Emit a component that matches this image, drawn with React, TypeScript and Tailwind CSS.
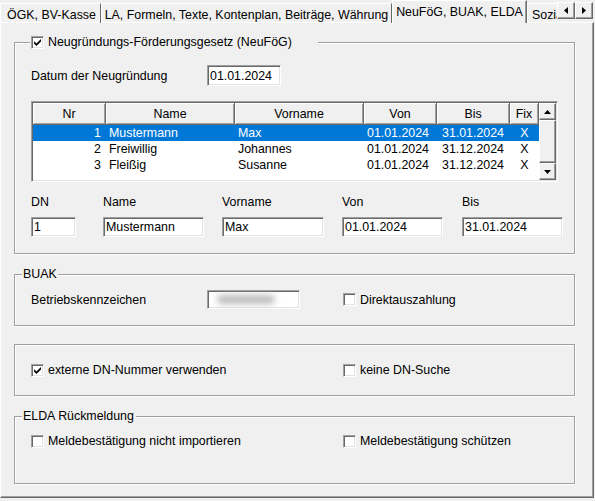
import React from "react";

type Row = { nr: number; name: string; vorname: string; von: string; bis: string; fix: string };

const rows: Row[] = [
  { nr: 1, name: "Mustermann", vorname: "Max", von: "01.01.2024", bis: "31.01.2024", fix: "X" },
  { nr: 2, name: "Freiwillig", vorname: "Johannes", von: "01.01.2024", bis: "31.12.2024", fix: "X" },
  { nr: 3, name: "Fleißig", vorname: "Susanne", von: "01.01.2024", bis: "31.12.2024", fix: "X" },
];

const raised =
  "border border-t-white border-l-white border-r-[#696969] border-b-[#696969] bg-[#f0f0f0] shadow-[inset_-1px_-1px_0_#a0a0a0]";
const sunken =
  "border border-t-[#a0a0a0] border-l-[#a0a0a0] border-r-white border-b-white bg-white shadow-[inset_1px_1px_0_#696969,inset_-1px_-1px_0_#e3e3e3]";
const group =
  "w-[561px] border border-[#a0a0a0] shadow-[inset_1px_1px_0_#fff,1px_1px_0_#fff]";
const head =
  "flex items-center justify-center border-r border-b border-[#696969] bg-[#f0f0f0] shadow-[inset_1px_1px_0_#fff,inset_-1px_-1px_0_#a0a0a0]";

const Check = ({ checked }: { checked?: boolean }) => (
  <span className={`flex h-[13px] w-[13px] shrink-0 items-center justify-center ${sunken}`}>
    {checked && (
      <svg width="7" height="7" viewBox="0 0 7 7">
        <path d="M0 2.2 L2.4 4.6 L7 0 L7 2.4 L2.4 7 L0 4.6 Z" fill="#000" />
      </svg>
    )}
  </span>
);

const CheckLabel = ({ checked, className = "", children }: { checked?: boolean; className?: string; children: React.ReactNode }) => (
  <div className={`flex items-center gap-[4px] whitespace-nowrap ${className}`}>
    <Check checked={checked} />
    <span>{children}</span>
  </div>
);

const Field = ({ className = "", children }: { className?: string; children?: React.ReactNode }) => (
  <div className={`flex shrink-0 items-center pl-[2px] whitespace-nowrap ${sunken} ${className}`}>{children}</div>
);

const Arrow = ({ dir }: { dir: "left" | "right" | "up" | "down" }) => {
  const pts = {
    left: "4,0 0,3.5 4,7",
    right: "0,0 4,3.5 0,7",
    up: "0,4 3.5,0 7,4",
    down: "0,0 7,0 3.5,4",
  }[dir];
  const horiz = dir === "left" || dir === "right";
  return (
    <svg width={horiz ? 4 : 7} height={horiz ? 7 : 4} viewBox={horiz ? "0 0 4 7" : "0 0 7 4"}>
      <polygon points={pts} fill="#000" />
    </svg>
  );
};

const TabStrip = () => (
  <div className="flex h-[23px] items-end">
    <div className="flex h-[23px] w-[557px] shrink-0 items-end overflow-x-clip">
      <div className="flex h-[20px] w-[101px] shrink-0 justify-center border-t border-l border-r border-t-white border-l-white border-r-[#696969] pt-[4px] pl-[2px] whitespace-nowrap">
        ÖGK, BV-Kasse
      </div>
      <div className="flex h-[20px] w-[291px] shrink-0 justify-center border-t border-l border-r border-t-white border-l-white border-r-[#696969] pt-[4px] whitespace-nowrap">
        LA, Formeln, Texte, Kontenplan, Beiträge, Währung
      </div>
      <div className="relative z-10 flex h-[23px] w-[135px] shrink-0 justify-center border-t border-l border-r border-t-white border-l-white border-r-[#696969] bg-[#f0f0f0] pt-[4px] whitespace-nowrap shadow-[inset_-1px_0_0_#a0a0a0]">
        NeuFöG, BUAK, ELDA
      </div>
      <div className="flex h-[20px] w-[30px] shrink-0 overflow-hidden border-t border-l border-t-white border-l-white pl-[4px] pt-[4px] whitespace-nowrap">
        Sozialversicherung
      </div>
    </div>
    <div className="mt-[2px] flex self-start">
      <div className={`flex h-[17px] w-[18px] items-center justify-center ${raised}`}>
        <Arrow dir="left" />
      </div>
      <div className={`flex h-[17px] w-[18px] items-center justify-center ${raised}`}>
        <Arrow dir="right" />
      </div>
    </div>
  </div>
);

const Table = () => (
  <div className={`ml-[16px] mt-[15px] flex h-[81px] w-[527px] p-px ${sunken}`}>
    <div className="w-[506px]">
      <div className="flex h-[22px]">
        <div className={`w-[73px] ${head}`}>Nr</div>
        <div className={`w-[129px] ${head}`}>Name</div>
        <div className={`w-[129px] ${head}`}>Vorname</div>
        <div className={`w-[73px] ${head}`}>Von</div>
        <div className={`w-[73px] ${head}`}>Bis</div>
        <div className={`w-[29px] ${head}`}>Fix</div>
      </div>
      {rows.map((r, i) => (
        <div key={r.nr} className={`flex h-[16px] leading-[16px] whitespace-nowrap ${i === 0 ? "bg-[#0078d7] text-white" : ""}`}>
          <div className="w-[73px] pr-[5px] text-right">{r.nr}</div>
          <div className="w-[129px] pl-[3px]">{r.name}</div>
          <div className="w-[129px] pl-[3px]">{r.vorname}</div>
          <div className="w-[73px] pl-[3px]">{r.von}</div>
          <div className="w-[73px] pl-[5px]">{r.bis}</div>
          <div className="w-[29px] text-center">{r.fix}</div>
        </div>
      ))}
    </div>
    <div className="flex w-[17px] flex-col">
      <div className={`flex h-[17px] items-center justify-center ${raised}`}>
        <Arrow dir="up" />
      </div>
      <div className={`flex-1 ${raised}`} />
      <div className={`flex h-[17px] items-center justify-center ${raised}`}>
        <Arrow dir="down" />
      </div>
    </div>
  </div>
);

export default function App() {
  return (
    <div className="h-[501px] w-[595px] overflow-hidden bg-[#f0f0f0] font-['Liberation_Sans',Arial,sans-serif] text-[12.4px] leading-[14px] text-black">
      <TabStrip />
      <div className="-mt-px h-[476px] w-[594px] border border-t-white border-l-white border-r-[#696969] border-b-[#696969] pl-[13px] pt-[12px] shadow-[inset_-1px_-1px_0_#a0a0a0]">
        <fieldset className={`h-[219px] ${group}`}>
          <legend className="ml-[15px] flex h-[14px] w-[288px] items-center gap-[4px] bg-[#f0f0f0] pl-[1px]">
            <Check checked />
            <span>Neugründungs-Förderungsgesetz (NeuFöG)</span>
          </legend>
          <div className="mt-[16px] flex h-[21px] items-center pl-[16px]">
            <span className="w-[176px]">Datum der Neugründung</span>
            <Field className="h-[21px] w-[74px]">01.01.2024</Field>
          </div>
          <Table />
          <div className="mt-[13px] flex pl-[16px]">
            <span className="w-[72px]">DN</span>
            <span className="w-[119px]">Name</span>
            <span className="w-[120px]">Vorname</span>
            <span className="w-[120px]">Von</span>
            <span>Bis</span>
          </div>
          <div className="mt-[8px] flex pl-[16px]">
            <div className="w-[72px]"><Field className="h-[20px] w-[45px]">1</Field></div>
            <div className="w-[119px]"><Field className="h-[20px] w-[101px]">Mustermann</Field></div>
            <div className="w-[120px]"><Field className="h-[20px] w-[102px]">Max</Field></div>
            <div className="w-[120px]"><Field className="h-[20px] w-[101px]">01.01.2024</Field></div>
            <Field className="h-[20px] w-[101px]">31.01.2024</Field>
          </div>
        </fieldset>

        <fieldset className={`mt-[13px] h-[59px] ${group}`}>
          <legend className="ml-[7px] bg-[#f0f0f0] px-[1px]">BUAK</legend>
          <div className="mt-[9px] flex h-[19px] items-center pl-[16px]">
            <span className="w-[176px]">Betriebskennzeichen</span>
            <Field className="h-[19px] w-[93px]">
              <span className="ml-[7px] h-[9px] w-[58px] rounded-full bg-[#bdbdbd] blur-[3px]" />
            </Field>
            <CheckLabel className="ml-[43px]">Direktauszahlung</CheckLabel>
          </div>
        </fieldset>

        <fieldset className={`mt-[18px] h-[52px] ${group}`}>
          <div className="mt-[18px] flex h-[14px] items-center pl-[16px]">
            <CheckLabel checked className="w-[312px]">externe DN-Nummer verwenden</CheckLabel>
            <CheckLabel>keine DN-Suche</CheckLabel>
          </div>
        </fieldset>

        <fieldset className={`mt-[13px] h-[75px] ${group}`}>
          <legend className="ml-[7px] bg-[#f0f0f0] pl-[1px] pr-[2px]">ELDA Rückmeldung</legend>
          <div className="mt-[11px] flex h-[14px] items-center pl-[16px]">
            <CheckLabel className="w-[312px]">Meldebestätigung nicht importieren</CheckLabel>
            <CheckLabel>Meldebestätigung schützen</CheckLabel>
          </div>
        </fieldset>
      </div>
    </div>
  );
}
